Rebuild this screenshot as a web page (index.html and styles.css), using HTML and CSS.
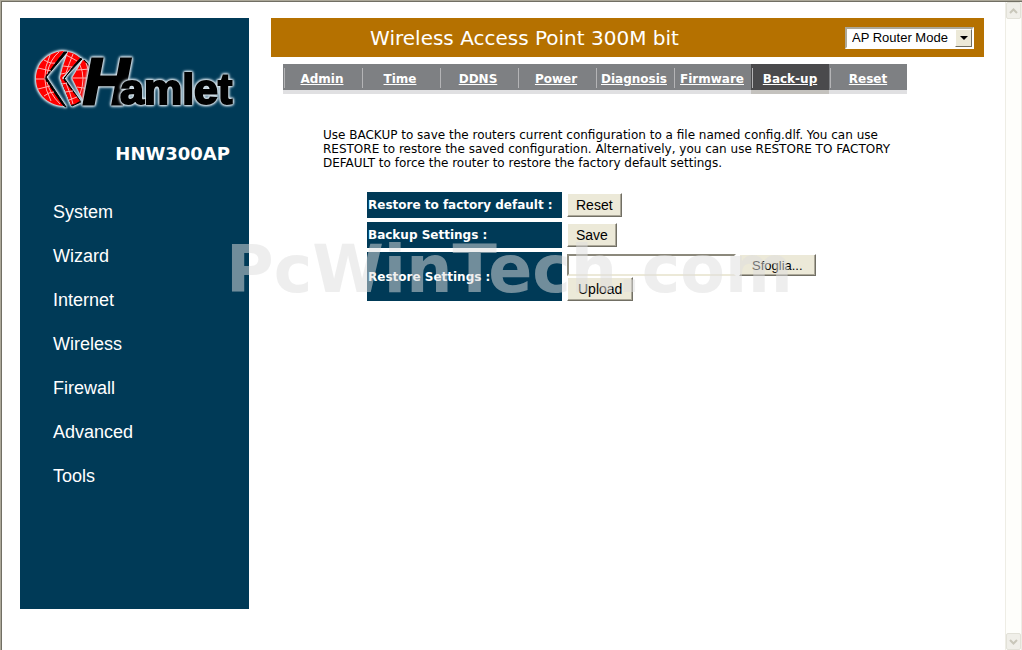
FILE: index.html
```
<!DOCTYPE html>
<html lang="en">
<head>
  <meta charset="UTF-8">
  <title>Wireless Access Point 300M bit</title>
  <link rel="stylesheet" href="styles.css">
</head>
<body>
  <div class="page">
    <div class="sidebar">
      <svg class="logo" width="216" height="76" viewBox="0 0 216 76" role="img" aria-label="Hamlet">
        <g class="logo-glow">
          <g fill="#000" stroke="#000" stroke-width="1" stroke-linejoin="round">
            <path d="M35 10 L14 35 L34 65 L29 62 L10 36 L32 10 Z"/>
            <path d="M50 17 L32 36 L49 60 L40 64 L30 40 L47 16 Z"/>
            <path d="M52 18 C66 29 65 49 52 58 Z"/>
          </g>
          <g fill="#f00">
            <path d="M32 9 C16 10 4 21 4 37 C4 52 16 63 31 64 L12 36 Z"/>
            <path d="M36 10 Q43 11 48 16 L30 36 L48 59 Q44 62 39 63 L28 36 L31 24 Z"/>
            <path d="M51 18 C63 27 64 47 51 58 L40 36 Z"/>
          </g>
          <g stroke="#ffb0b0" fill="none" stroke-width="1">
            <path d="M4 37 H12 M6 26 L19 29 M6 47 L18 44 M12 18 Q19 22 23 21 M12 54 Q17 50 22 50 M18 13 Q7 37 19 59 M27 10 Q18 17 15 32 M28 62 Q18 52 15 40"/>
            <path d="M34 13 Q40 16 45 19 M31 24 L40 25 M29 32 L34 31 M30 42 L35 41 M33 50 L41 49 M37 58 L45 55 M41 12 Q37 22 34 31 M34 41 Q38 50 41 62"/>
            <path d="M40 36 H60 M45 28 L58 27 M45 45 L58 47 M48 23 Q54 36 48 52 M54 21 Q61 36 54 54"/>
          </g>
        </g>
        <text class="logo-initial" x="51" y="62">H</text>
        <text class="logo-name" x="88" y="62">amlet</text>
      </svg>
      <h2>HNW300AP</h2>
      <nav class="menu">
        <a href="#">System</a>
        <a href="#">Wizard</a>
        <a href="#">Internet</a>
        <a href="#">Wireless</a>
        <a href="#">Firewall</a>
        <a href="#">Advanced</a>
        <a href="#">Tools</a>
      </nav>
    </div>

    <div class="main">
      <div class="header">
        <h1>Wireless Access Point 300M bit</h1>
        <div class="select-box">
          <select aria-label="Operating mode">
            <option>AP Router Mode</option>
          </select>
          <span class="select-arrow"></span>
        </div>
      </div>

      <nav class="tabs">
        <a href="#">Admin</a>
        <a href="#">Time</a>
        <a href="#">DDNS</a>
        <a href="#">Power</a>
        <a href="#">Diagnosis</a>
        <a href="#">Firmware</a>
        <a href="#" class="active">Back-up</a>
        <a href="#">Reset</a>
      </nav>

      <p class="intro">Use BACKUP to save the routers current configuration to a file named config.dlf. You can use RESTORE to restore the saved configuration. Alternatively, you can use RESTORE TO FACTORY DEFAULT to force the router to restore the factory default settings.</p>

      <form onsubmit="return false">
        <table class="settings">
          <tr>
            <th scope="row">Restore to factory default :</th>
            <td><button type="button">Reset</button></td>
          </tr>
          <tr>
            <th scope="row">Backup Settings :</th>
            <td><button type="button">Save</button></td>
          </tr>
          <tr>
            <th scope="row"><label for="config-file">Restore Settings :</label></th>
            <td>
              <div class="file-row">
                <input type="text" id="config-file">
                <button type="button">Sfoglia...</button>
              </div>
              <button type="submit" class="wide">Upload</button>
            </td>
          </tr>
        </table>
      </form>
    </div>

    <div class="scrollbar">
      <button type="button" aria-label="Scroll up"><svg width="9" height="6" viewBox="0 0 9 6"><path d="M1 5 L4.500 1.500 L8 5"/></svg></button>
      <button type="button" aria-label="Scroll down"><svg width="9" height="6" viewBox="0 0 9 6"><path d="M1 1 L4.500 4.500 L8 1"/></svg></button>
    </div>

    <div class="watermark">PcWinTech.com</div>
  </div>
</body>
</html>
```
FILE: styles.css
```
* {
  box-sizing: border-box;
}
body {
  margin: 0;
  background: #fff;
  font-family: Verdana, "DejaVu Sans", sans-serif;
  font-size: 12px;
  color: #000;
}
.page {
  position: relative;
  display: flex;
  align-items: flex-start;
  min-height: 100vh;
  border-top: 1px solid #aca899;
  border-left: 1px solid #aca899;
  box-shadow: inset 1px 1px 0 #716f64;
}

/* left column */
.sidebar {
  flex: none;
  width: 229px;
  min-height: 591px;
  margin: 17px 22px 24px 19px;
  padding-top: 24px;
  background: #003a57;
  color: #fff;
}
.logo {
  display: block;
  margin-left: 12px;
}
.logo-glow,
.logo text {
  filter: drop-shadow(0 0 1px #e4eef4) drop-shadow(0 0 1px #e4eef4) drop-shadow(0 0 1px #a9c0ce);
}
.logo text {
  fill: #000;
  stroke: #000;
}
.logo-initial {
  font: italic bold 64px "Liberation Sans", Arial, sans-serif;
  stroke-width: 3px;
}
.logo-name {
  font: bold 43px "Liberation Sans", Arial, sans-serif;
  stroke-width: 2px;
}
.sidebar h2 {
  margin: 24px 19px 0 0;
  font-size: 18px;
  line-height: 24px;
  text-align: right;
}
.menu {
  margin: 24px 0 0 33px;
}
.menu a {
  display: block;
  font: 18px/44px "Liberation Sans", Arial, sans-serif;
  color: #fff;
  text-decoration: none;
}

/* right column */
.main {
  flex: 1;
  min-width: 0;
  margin: 17px 21px 0 0;
}
.header {
  display: flex;
  align-items: center;
  height: 39px;
  padding: 0 10px 0 31px;
  background: #b57100;
  color: #fff;
}
.header h1 {
  flex: 1;
  margin: 0;
  padding-right: 98px;
  font-size: 20px;
  font-weight: normal;
  text-align: center;
  white-space: nowrap;
}
.select-box {
  position: relative;
  flex: none;
}
.select-box select {
  appearance: none;
  display: block;
  width: 129px;
  height: 22px;
  padding: 0 20px 0 5px;
  border: 2px solid;
  border-color: #aca899 #fff #fff #aca899;
  border-radius: 0;
  background: #fff;
  color: #000;
  font: 13px "Liberation Sans", Arial, sans-serif;
}
.select-arrow {
  position: absolute;
  top: 2px;
  right: 2px;
  width: 17px;
  height: 18px;
  border: 1px solid;
  border-color: #fff #716f64 #716f64 #fff;
  background: #ece9d8;
  pointer-events: none;
}
.select-arrow::after {
  content: "";
  position: absolute;
  top: 6px;
  left: 4px;
  border: 4px solid transparent;
  border-top-color: #000;
  border-bottom: 0;
}
.tabs {
  display: flex;
  width: fit-content;
  margin: 7px 0 0 12px;
}
.tabs a {
  position: relative;
  width: 78px;
  height: 30px;
  border-bottom: 4px solid #e0e0e2;
  background: #7e8083;
  color: #fff;
  font-weight: bold;
  line-height: 30px;
  text-align: center;
}
.tabs a::before {
  content: "";
  position: absolute;
  top: 4px;
  left: 1px;
  width: 1px;
  height: 20px;
  background: #b4b4b6;
}
.tabs a.active {
  border-bottom-color: #c4c2be;
  background: #4a4a4c;
}
.intro {
  max-width: 600px;
  margin: 34px 0 0 52px;
  line-height: 14px;
}

.settings {
  margin: 18px 0 0 92px;
  border-spacing: 4px;
}
.settings th {
  width: 195px;
  height: 26px;
  padding: 0 1px;
  background: #003a57;
  color: #fff;
  font-size: 12px;
  text-align: left;
  white-space: nowrap;
}
.settings td {
  padding: 0 1px;
}
.settings button {
  display: block;
  height: 24px;
  padding: 0 8px;
  border: 1px solid;
  border-color: #fff #716f64 #716f64 #fff;
  box-shadow: inset -1px -1px 0 #aca899;
  background: #ece9d8;
  color: #000;
  font: 14px "Liberation Sans", Arial, sans-serif;
}
.file-row {
  display: flex;
  gap: 3px;
  margin: 2px 0 1px;
}
.file-row input {
  width: 169px;
  height: 22px;
  border: 2px solid;
  border-color: #8c897c #fff #ece9d8 #8c897c;
  background: #fff;
}
.settings .file-row button {
  height: 22px;
  padding: 0 12px;
  font-size: 13px;
}
.settings .wide {
  padding: 0 10px;
}

.scrollbar {
  display: flex;
  flex-direction: column;
  justify-content: space-between;
  align-self: stretch;
  width: 17px;
  margin-top: 1px;
  border-left: 1px solid #eeede5;
  border-right: 1px solid #eeede5;
  background: #fefefb;
}
.scrollbar button {
  display: flex;
  align-items: center;
  justify-content: center;
  height: 17px;
  padding: 0;
  border: 1px solid #e2e1d8;
  border-radius: 2px;
  background: #f0efe9;
}
.scrollbar path {
  fill: none;
  stroke: #c9c7ba;
  stroke-width: 2;
}

/* site stamp lying over the page */
.watermark {
  position: absolute;
  top: 231px;
  left: 225px;
  font-size: 65px;
  font-weight: bold;
  line-height: 76px;
  color: rgba(222, 222, 222, 0.51);
  pointer-events: none;
}
```
